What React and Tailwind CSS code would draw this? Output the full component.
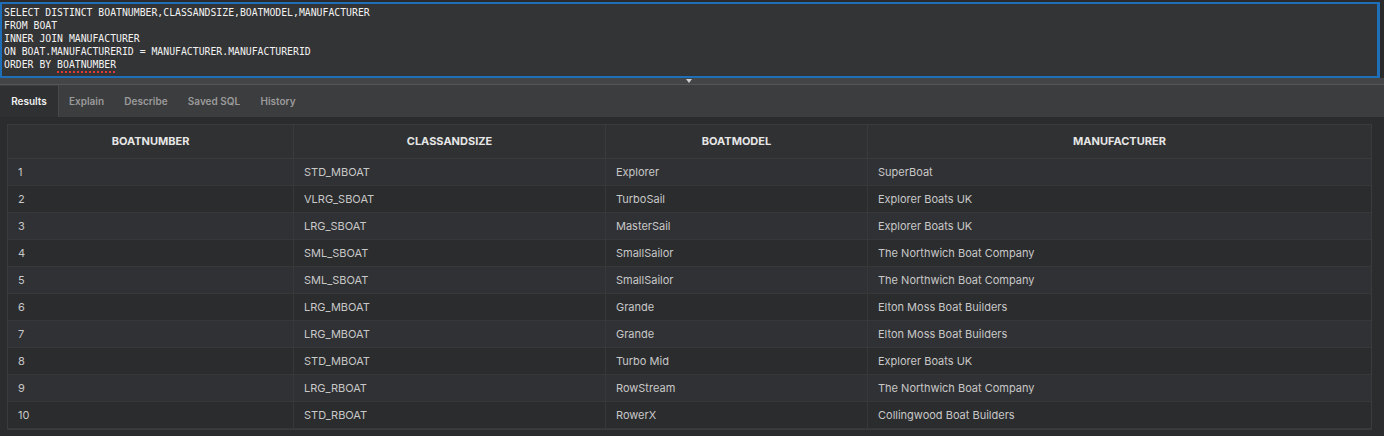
import React from "react";

const rows = [
  ["1", "STD_MBOAT", "Explorer", "SuperBoat"],
  ["2", "VLRG_SBOAT", "TurboSail", "Explorer Boats UK"],
  ["3", "LRG_SBOAT", "MasterSail", "Explorer Boats UK"],
  ["4", "SML_SBOAT", "SmallSailor", "The Northwich Boat Company"],
  ["5", "SML_SBOAT", "SmallSailor", "The Northwich Boat Company"],
  ["6", "LRG_MBOAT", "Grande", "Elton Moss Boat Builders"],
  ["7", "LRG_MBOAT", "Grande", "Elton Moss Boat Builders"],
  ["8", "STD_MBOAT", "Turbo Mid", "Explorer Boats UK"],
  ["9", "LRG_RBOAT", "RowStream", "The Northwich Boat Company"],
  ["10", "STD_RBOAT", "RowerX", "Collingwood Boat Builders"],
];

const cols = ["BOATNUMBER", "CLASSANDSIZE", "BOATMODEL", "MANUFACTURER"];
const widths = ["w-[285px]", "w-[312px]", "w-[262px]", "flex-1"];

export default function App() {
  return (
    <div className="w-[1384px] h-[436px] bg-[#2b2c2e] overflow-hidden flex flex-col" style={{ fontFamily: "Inter, 'Noto Sans', sans-serif" }}>
      <div className="h-[2px] bg-[#2a2a2b]" />
      {/* editor */}
      <div className="flex pr-[4px] bg-[#2a2a2b]">
        <div className="flex-1 h-[76px] border-2 border-[#1f6fb8] border-r-[3px] bg-[#333436] pl-[2px] pt-[2px]" style={{ fontFamily: "'DejaVu Sans Mono', monospace" }}>
          <div className="text-[9.8px] leading-[13px] text-[#f2f2f2] whitespace-pre">
            <div>SELECT DISTINCT BOATNUMBER,CLASSANDSIZE,BOATMODEL,MANUFACTURER</div>
            <div>FROM BOAT</div>
            <div>INNER JOIN MANUFACTURER</div>
            <div>ON BOAT.MANUFACTURERID = MANUFACTURER.MANUFACTURERID</div>
            <div>ORDER BY <span className="underline decoration-dotted decoration-[#e03a3a] decoration-[1.5px] underline-offset-[3px]">BOATNUMBER</span></div>
          </div>
        </div>
      </div>
      {/* splitter */}
      <div className="h-[7px] bg-[#444546] border-b border-[#555657] flex justify-center pr-[6px]">
        <div className="w-0 h-0 border-l-[3px] border-r-[3px] border-t-[4px] border-l-transparent border-r-transparent border-t-[#d0d0d0] mt-[1px]" />
      </div>
      {/* tabs */}
      <div className="h-[32px] bg-[#3c3d3e] flex items-stretch text-[10px] font-semibold pr-[4px]">
        <div className="w-[58px] bg-[#2f3032] text-[#f0f0f0] flex items-center justify-center mt-[1px]">Results</div>
        <div className="w-[56px] flex items-center justify-center text-[#9a9a9b] border-l border-[#48494a]">Explain</div>
        <div className="w-[64px] flex items-center justify-center text-[#9a9a9b]">Describe</div>
        <div className="w-[72px] flex items-center justify-center text-[#9a9a9b]">Saved SQL</div>
        <div className="w-[56px] flex items-center justify-center text-[#9a9a9b]">History</div>
      </div>
      {/* results */}
      <div className="flex-1 bg-[#2b2c2e] pt-[7px] pl-[7px] pr-[12px]">
        <div className="border border-[#3a3b3d]">
          <div className="flex h-[34px] bg-[#303133] border-b border-[#3a3b3d]">
            {cols.map((c, i) => (
              <div key={c} className={`${widths[i]} ${i > 0 ? "border-l border-[#3a3b3d]" : ""} flex items-center justify-center text-[11px] font-bold text-[#e6e6e6]`}>{c}</div>
            ))}
          </div>
          {rows.map((r, ri) => (
            <div key={ri} className={`flex h-[27px] border-b border-[#37383a] ${ri % 2 === 0 ? "bg-[#303134]" : "bg-[#2b2c2e]"}`}>
              {r.map((v, i) => (
                <div key={i} className={`${widths[i]} ${i > 0 ? "border-l border-[#37383a]" : ""} flex items-center pl-[10px] text-[11px] text-[#c8c8c8]`}>{v}</div>
              ))}
            </div>
          ))}
        </div>
      </div>
    </div>
  );
}
